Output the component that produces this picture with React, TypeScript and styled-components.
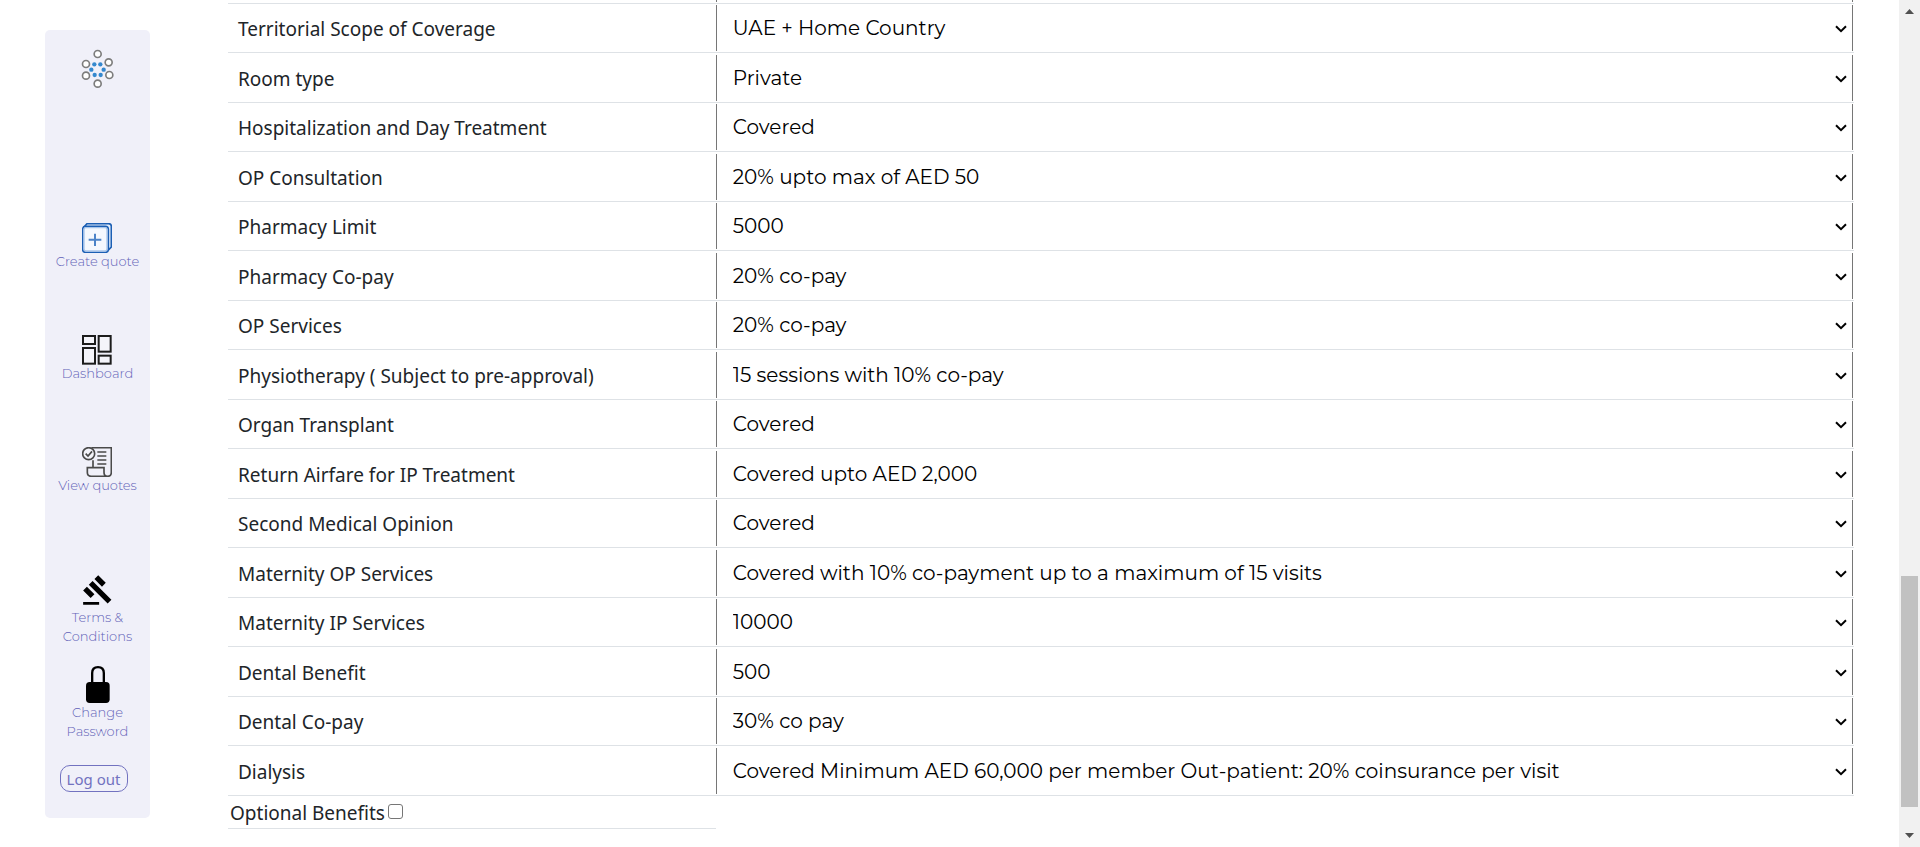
import React from "react";
import styled, { createGlobalStyle } from "styled-components";

const GlobalStyle = createGlobalStyle`
  *, *::before, *::after { box-sizing: border-box; }
  body {
    margin: 0;
    background: #fff;
    color: #212529;
    font-family: "Segoe UI", "Noto Sans", sans-serif;
    font-size: 19px;
    line-height: 28px;
  }
`;

const Page = styled.div`
  display: flex;
  height: 100vh;
  overflow: hidden;
`;

const Sidebar = styled.nav`
  flex: none;
  display: flex;
  flex-direction: column;
  align-items: center;
  width: 105px;
  margin: 30px 0 29px 45px;
  padding-top: 19px;
  border-radius: 5px;
  background: #f0f0f9;
`;

const NavLink = styled.a<{ $space: number; $tall?: boolean }>`
  display: flex;
  flex-direction: column;
  align-items: center;
  margin-top: ${(p) => p.$space}px;
  color: #6464b8;
  font-family: Montserrat, "Inter", sans-serif;
  font-size: 13px;
  font-weight: 300;
  line-height: ${(p) => (p.$tall ? 19 : 17)}px;
  text-align: center;
  text-decoration: none;

  svg { display: block; }
`;

const TermsLink = styled(NavLink)`
  gap: 2px;
`;

const LogoutButton = styled.button`
  width: 68px;
  height: 27px;
  margin: 24px 8px 0 0;
  padding: 0;
  border: 1px solid #7272c0;
  border-radius: 10px;
  background: transparent;
  color: #7272c0;
  font-family: "Segoe UI", "Noto Sans", sans-serif;
  font-size: 15px;
  line-height: 24px;
`;

const Main = styled.main`
  flex: 1;
  min-width: 0;
  padding: 0 45px 0 78px;
`;

const BenefitTable = styled.table`
  width: 100%;
  table-layout: fixed;
  border-collapse: separate;
  border-spacing: 0;
`;

const LabelColumn = styled.col`
  width: 30%;
`;

const Row = styled.tr`
  height: 49px;

  &:nth-child(even) { height: 50px; }
`;

const LabelCell = styled.th`
  padding: 2px 0 0 10px;
  border-bottom: 1px solid #dee2e6;
  font-weight: 400;
  text-align: left;
`;

const ValueCell = styled.td`
  padding: 0 1px 1px 0;
  border-bottom: 1px solid #dee2e6;
  vertical-align: bottom;
`;

const ClippedField = styled.div`
  height: 2px;
  border: solid #767676;
  border-width: 0 1px;
`;

const ClippedCell = styled(ValueCell)`
  line-height: 0;
`;

const SelectBox = styled.div`
  display: grid;
  align-items: center;

  & > * { grid-area: 1 / 1; }

  svg {
    justify-self: end;
    margin: 2px 6px 0 0;
    pointer-events: none;
  }
`;

const Select = styled.select`
  appearance: none;
  width: 100%;
  height: 46px;
  padding: 0 24px 0 16px;
  border: solid #767676;
  border-width: 0 1px;
  border-radius: 0;
  background: #fff;
  color: #000;
  font-family: Montserrat, "Inter", sans-serif;
  font-size: 20px;
`;

const OptionalCell = styled.td`
  height: 33px;
  padding: 1px 0 0 2px;
  border-bottom: 1px solid #dee2e6;
`;

const OptionalLabel = styled.label`
  display: flex;
  align-items: center;
  gap: 3px;
`;

const Checkbox = styled.input`
  appearance: none;
  width: 15px;
  height: 15px;
  margin: 0 0 2px;
  border: 1px solid #767676;
  border-radius: 3px;
  background: #fff;

  &:checked { background: #0075ff; }
`;

const ScrollRail = styled.div`
  flex: none;
  display: flex;
  flex-direction: column;
  align-items: center;
  width: 21px;
  background: #f1f1f1;

  svg { flex: none; display: block; }
`;

const RailSpace = styled.div<{ $share: number }>`
  flex: ${(p) => p.$share} 0 0;
`;

const Thumb = styled(RailSpace)`
  width: 17px;
  background: #c1c1c1;
`;

const Logo = () => (
  <svg width="34" height="40" viewBox="153 87 102 120" aria-hidden="true">
    <g fill="#fff" stroke="#7d7d7d" strokeWidth="5">
      {[[203, 102], [236, 127], [238, 165], [203, 191], [168, 167], [168, 132]].map(([x, y]) => (
        <circle key={`${x}-${y}`} cx={x} cy={y} r="10.5" />
      ))}
    </g>
    <g fill="#3488ce">
      {[[193, 133], [211, 133], [221, 149], [212, 165], [194, 165], [184, 149]].map(([x, y]) => (
        <circle key={`${x}-${y}`} cx={x} cy={y} r="6.500" />
      ))}
    </g>
  </svg>
);

const CreateIcon = () => (
  <svg width="30" height="30" viewBox="0 0 90 90" fill="none" aria-hidden="true">
    <path d="M6 12 L15 2 H80 Q88 2 88 10 V72 L78 82" fill="#e4eefb" stroke="#1c5fb4" strokeWidth="5" />
    <rect x="2" y="10" width="77" height="78" rx="9" fill="#f5f8fe" stroke="#1c5fb4" strokeWidth="5" />
    <rect x="6" y="14" width="69" height="70" rx="6" stroke="#a9c5ea" strokeWidth="4" />
    <path d="M39 32 V69 M20 50 H58" stroke="#4c83c8" strokeWidth="6" />
  </svg>
);

const DashboardIcon = () => (
  <svg width="30" height="30" viewBox="0 0 90 90" fill="#f4f4fa" aria-hidden="true">
    <g stroke="#1c1c1c" strokeWidth="6">
      <rect x="3" y="3" width="36" height="24" />
      <rect x="50" y="3" width="36" height="47" />
      <rect x="3" y="39" width="36" height="47" />
      <rect x="50" y="62" width="36" height="24" />
    </g>
  </svg>
);

const QuotesIcon = () => (
  <svg width="30" height="30" viewBox="0 0 90 90" fill="none" stroke="#4a4a4a" strokeWidth="5" aria-hidden="true">
    <path d="M28 2 H88 V76 Q88 88 77 88 Q66 88 66 76 V62 H16 V76 Q16 88 28 88 H77" />
    <path d="M33 40 V62" />
    <circle cx="20" cy="20" r="18" fill="#f4f4fa" />
    <path d="M11 20 L18 27 L30 13" />
    <path d="M46 15 H73 M46 27 H73 M46 39 H73 M46 51 H73" />
  </svg>
);

const GavelIcon = () => (
  <svg width="32" height="32" viewBox="0 0 24 24" aria-hidden="true">
    <path d="M1 21h12v2H1zM5.245 8.07l2.83-2.827 14.14 14.142-2.828 2.828zM12.317 1l5.657 5.656-2.83 2.83-5.654-5.66zM3.825 9.485l5.657 5.657-2.828 2.828-5.657-5.657z" transform="translate(0.600 0)" />
  </svg>
);

const LockIcon = () => (
  <svg width="24" height="37" viewBox="0 0 72 111" aria-hidden="true">
    <rect x="0" y="48" width="71" height="63" rx="11" />
    <path d="M18.500 52 V21 Q18.500 3.500 36 3.500 Q53.500 3.500 53.500 21 V52" fill="none" stroke="#000" strokeWidth="7" />
  </svg>
);

const Chevron = () => (
  <svg width="12" height="8" viewBox="0 0 12 8" fill="none" aria-hidden="true">
    <path d="M1 1.300 L6 6.200 L11 1.300" stroke="#000" strokeWidth="2" />
  </svg>
);

const benefits: [string, string][] = [
  ["Territorial Scope of Coverage", "UAE + Home Country"],
  ["Room type", "Private"],
  ["Hospitalization and Day Treatment", "Covered"],
  ["OP Consultation", "20% upto max of AED 50"],
  ["Pharmacy Limit", "5000"],
  ["Pharmacy Co-pay", "20% co-pay"],
  ["OP Services", "20% co-pay"],
  ["Physiotherapy ( Subject to pre-approval)", "15 sessions with 10% co-pay"],
  ["Organ Transplant", "Covered"],
  ["Return Airfare for IP Treatment", "Covered upto AED 2,000"],
  ["Second Medical Opinion", "Covered"],
  ["Maternity OP Services", "Covered with 10% co-payment up to a maximum of 15 visits"],
  ["Maternity IP Services", "10000"],
  ["Dental Benefit", "500"],
  ["Dental Co-pay", "30% co pay"],
  ["Dialysis", "Covered Minimum AED 60,000 per member Out-patient: 20% coinsurance per visit"],
];

export default function App() {
  return (
    <Page>
      <GlobalStyle />
      <Sidebar>
        <Logo />
        <NavLink href="#create" $space={134}>
          <CreateIcon />
          Create quote
        </NavLink>
        <NavLink href="#dashboard" $space={65}>
          <DashboardIcon />
          Dashboard
        </NavLink>
        <NavLink href="#quotes" $space={65}>
          <QuotesIcon />
          View quotes
        </NavLink>
        <TermsLink href="#terms" $space={80} $tall>
          <GavelIcon />
          <span>Terms &amp;<br />Conditions</span>
        </TermsLink>
        <NavLink href="#password" $space={20} $tall>
          <LockIcon />
          <span>Change<br />Password</span>
        </NavLink>
        <LogoutButton type="button">Log out</LogoutButton>
      </Sidebar>
      <Main>
        <BenefitTable>
          <colgroup>
            <LabelColumn />
            <col />
          </colgroup>
          <thead>
            <tr>
              <ClippedCell />
              <ClippedCell><ClippedField /></ClippedCell>
            </tr>
          </thead>
          <tbody>
            {benefits.map(([label, value], i) => (
              <Row key={label}>
                <LabelCell scope="row">
                  <label htmlFor={`benefit-${i}`}>{label}</label>
                </LabelCell>
                <ValueCell>
                  <SelectBox>
                    <Select id={`benefit-${i}`} defaultValue={value}>
                      <option>{value}</option>
                    </Select>
                    <Chevron />
                  </SelectBox>
                </ValueCell>
              </Row>
            ))}
          </tbody>
          <tfoot>
            <tr>
              <OptionalCell>
                <OptionalLabel>
                  Optional Benefits
                  <Checkbox type="checkbox" />
                </OptionalLabel>
              </OptionalCell>
            </tr>
          </tfoot>
        </BenefitTable>
      </Main>
      <ScrollRail aria-hidden="true">
        <svg width="21" height="21" viewBox="0 0 21 21"><path d="M6 14 L10.500 9 L15 14Z" fill="#505050" /></svg>
        <RailSpace $share={555} />
        <Thumb $share={231} />
        <RailSpace $share={19} />
        <svg width="21" height="21" viewBox="0 0 21 21"><path d="M6 7 L10.500 12 L15 7Z" fill="#505050" /></svg>
      </ScrollRail>
    </Page>
  );
}
